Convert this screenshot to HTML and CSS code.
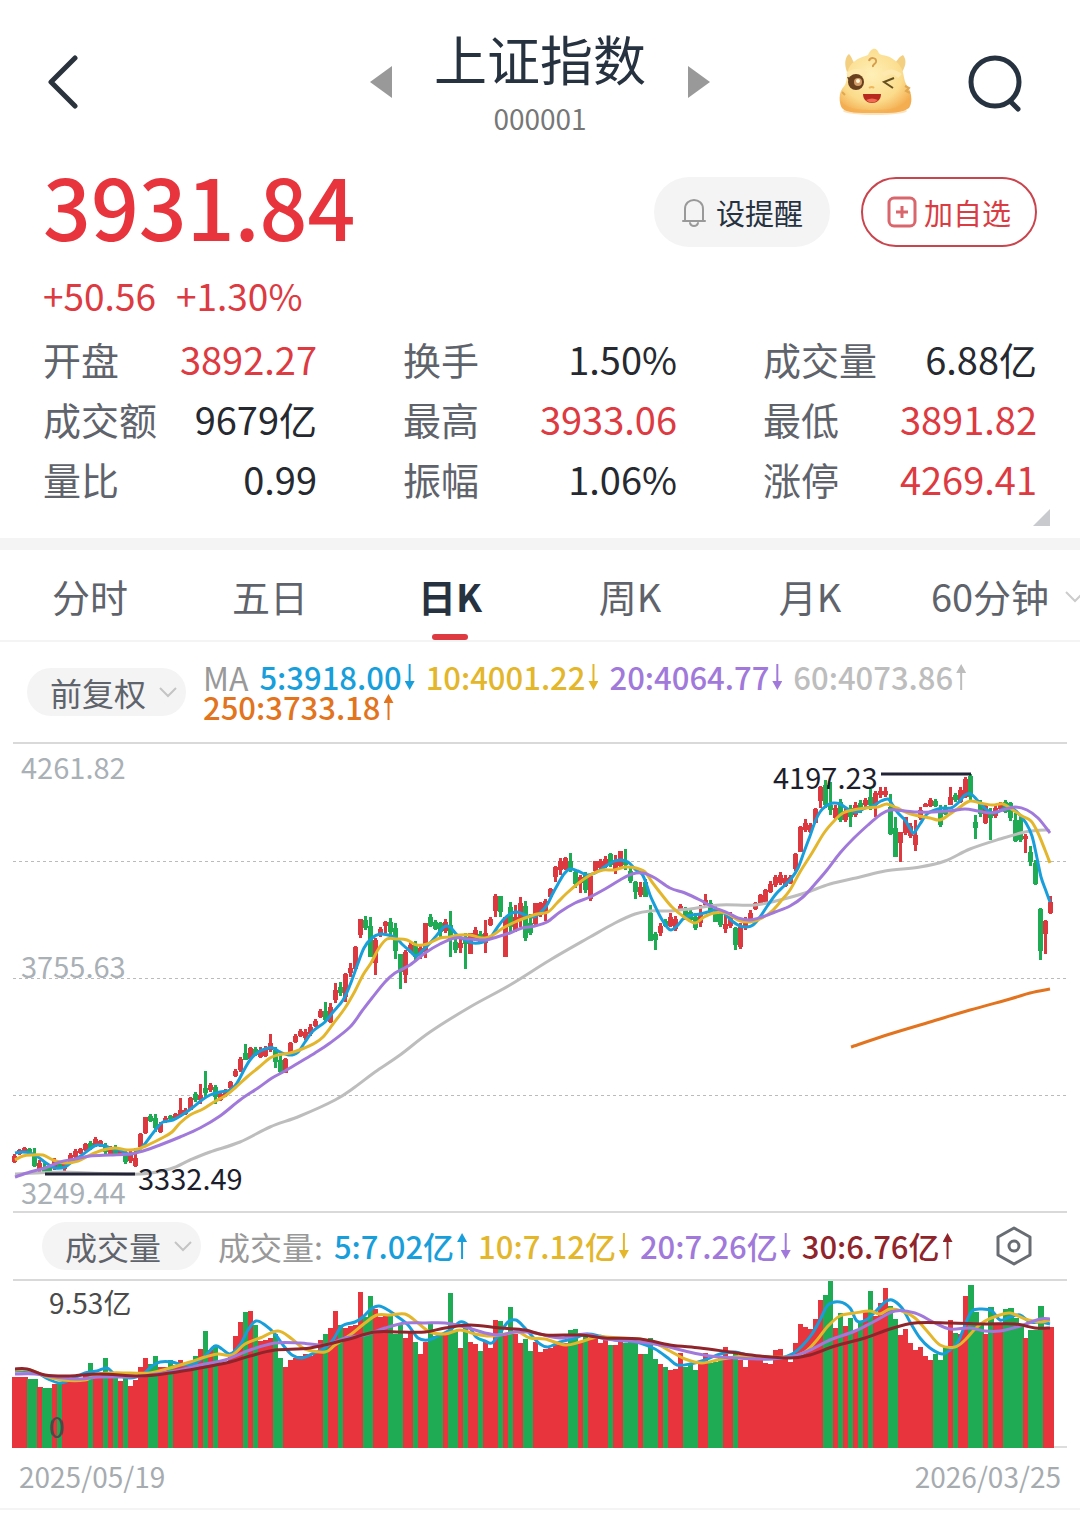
FILE: index.html
```html
<!DOCTYPE html>
<html lang="zh-CN">
<head>
    <meta charset="UTF-8">
    <meta name="viewport" content="width=device-width, initial-scale=1.0">
    <title>上证指数 000001</title>
    <link rel="stylesheet" href="styles.css">
</head>
<body>
    <header class="topbar">
        <button class="icon-btn back" aria-label="返回">
            <svg width="32" height="54" viewBox="0 0 32 54"><path d="M28 3L4 27l24 24" fill="none" stroke="#2a323c" stroke-width="5" stroke-linecap="round" stroke-linejoin="round"/></svg>
        </button>
        <div class="switcher">
            <button class="icon-btn" aria-label="上一个">
                <svg width="22" height="32" viewBox="0 0 22 32"><path d="M22 0v32L0 16z" fill="#999"/></svg>
            </button>
            <div class="name">
                <h1>上证指数</h1>
                <p>000001</p>
            </div>
            <button class="icon-btn" aria-label="下一个">
                <svg width="22" height="32" viewBox="0 0 22 32"><path d="M0 0v32l22-16z" fill="#999"/></svg>
            </button>
        </div>
        <div class="tools">
            <button class="icon-btn" aria-label="助手">
                <svg width="74" height="68" viewBox="0 0 74 68">
                    <defs>
                        <radialGradient id="skin" cx="45%" cy="40%" r="65%">
                            <stop offset="0" stop-color="#fff0b8"/>
                            <stop offset=".65" stop-color="#fbdc8c"/>
                            <stop offset="1" stop-color="#f3ac4e"/>
                        </radialGradient>
                    </defs>
                    <ellipse cx="37" cy="63" rx="32" ry="4" fill="#fde3bd"/>
                    <path d="M9 24C6 16 7 9 11 6c4 4 3 8 8 11zM64 24c5-8 4-13 1-17-5 2-6 7-10 10z" fill="#f3cf82"/>
                    <path d="M12 18C18 10 25 9 30 7c2-5 6-8 9-5 2 2 1 4 5 5 8 1 14 5 18 11 4 5 3 11 6 18 6 7 7 18 3 24-8 5-16 5-34 5S9 65 4 60C0 52 1 43 7 37c3-6 1-13 5-19z" fill="url(#skin)"/>
                    <path d="M3 53c6 8 17 9 34 9s26-3 34-11c1 5 0 9-4 11-9 4-51 4-60 0-4-2-5-5-4-9z" fill="#f4ad52" opacity=".65"/>
                    <path d="M31 13c1-4 8-4 7 1-1 3-4 2-3 5" fill="none" stroke="#d79e4d" stroke-width="2"/>
                    <path d="M67 38l4 2-3 3 4 2M4 44l3 3" fill="none" stroke="#e0a650" stroke-width="2"/>
                    <path d="M10 27c5-5 14-4 18-1M45 27c5-4 11-4 17 1" fill="none" stroke="#ffe9ae" stroke-width="5"/>
                    <circle cx="18" cy="34" r="8" fill="#68401f"/>
                    <path d="M9 29l6 1-3 5z" fill="#68401f"/>
                    <circle cx="20" cy="34" r="4" fill="#d39b67"/>
                    <circle cx="20" cy="33" r="2" fill="#fff7dd"/>
                    <path d="M56 30l-10 4 9 6" fill="none" stroke="#65501f" stroke-width="2"/>
                    <path d="M31 40q3-2 5 0" fill="none" stroke="#efb85c" stroke-width="2"/>
                    <path d="M25 46h18c0 12-18 12-18 0z" fill="#b7291e"/>
                    <path d="M28 52q6-3 12 0-6 5-12 0z" fill="#f06a54"/>
                </svg>
            </button>
            <button class="icon-btn" aria-label="搜索">
                <svg width="56" height="60" viewBox="0 0 56 60"><circle cx="27" cy="30" r="24" fill="none" stroke="#26323f" stroke-width="5"/><path d="M43 50l7 7" stroke="#26323f" stroke-width="5" stroke-linecap="round"/></svg>
            </button>
        </div>
    </header>

    <section class="quote">
        <div class="price-row">
            <strong class="price">3931.84</strong>
            <div class="actions">
                <button class="alert-btn">
                    <svg width="26" height="30" viewBox="0 0 26 30"><path d="M2 24h22M4 24V12c0-12 18-12 18 0v12M9 26c1 4 7 4 8 0" fill="none" stroke="#999" stroke-width="2" stroke-linecap="round"/></svg>
                    设提醒
                </button>
                <button class="add-btn">
                    <svg width="30" height="32" viewBox="0 0 30 32"><rect x="2" y="2" width="26" height="28" rx="5" fill="none" stroke="#d9666c" stroke-width="3"/><path d="M9 16h12M15 10v12" stroke="#d9666c" stroke-width="3"/></svg>
                    加自选
                </button>
            </div>
        </div>
        <p class="change"><span>+50.56</span><span>+1.30%</span></p>
        <dl class="stats">
            <div><dt>开盘</dt><dd class="up">3892.27</dd></div>
            <div><dt>换手</dt><dd>1.50%</dd></div>
            <div><dt>成交量</dt><dd>6.88亿</dd></div>
            <div><dt>成交额</dt><dd>9679亿</dd></div>
            <div><dt>最高</dt><dd class="up">3933.06</dd></div>
            <div><dt>最低</dt><dd class="up">3891.82</dd></div>
            <div><dt>量比</dt><dd>0.99</dd></div>
            <div><dt>振幅</dt><dd>1.06%</dd></div>
            <div><dt>涨停</dt><dd class="up">4269.41</dd></div>
        </dl>
        <button class="icon-btn expand" aria-label="展开">
            <svg width="17" height="17" viewBox="0 0 17 17"><path d="M17 0v17H0z" fill="#c9cacd"/></svg>
        </button>
    </section>

    <nav class="tabs">
        <button>分时</button>
        <button>五日</button>
        <button class="active">日K</button>
        <button>周K</button>
        <button>月K</button>
        <button class="more">60分钟
            <svg width="22" height="14" viewBox="0 0 22 14"><path d="M2 2l9 9 9-9" fill="none" stroke="#ccc" stroke-width="2"/></svg>
        </button>
    </nav>

    <main class="charts">
        <div class="legend-row">
            <div class="pick">
                <select aria-label="复权方式"><option>前复权</option></select>
                <svg width="20" height="13" viewBox="0 0 20 13"><path d="M2 2l8 8 8-8" fill="none" stroke="#c4c4c4" stroke-width="2"/></svg>
            </div>
            <div class="legend">
                <span class="legend-name">MA</span>
                <span class="ma5 down">5:3918.00</span>
                <span class="ma10 down">10:4001.22</span>
                <span class="ma20 down">20:4064.77</span>
                <span class="ma60 rise">60:4073.86</span>
                <span class="ma250 rise">250:3733.18</span>
            </div>
        </div>

        <svg class="kline" viewBox="13 744 1054 467" role="img" aria-label="日K线">
            <path class="grid" d="M13 861.5H1067M13 978.5H1067M13 1095.5H1067"/>
            <g id="candles"></g>
            <g id="priceLines"></g>
            <path class="marker" d="M45 1174H135M881 774H971"/>
            <g class="axis">
                <text x="21" y="779">4261.82</text>
                <text x="21" y="978">3755.63</text>
                <text x="21" y="1204">3249.44</text>
            </g>
            <g class="extreme">
                <text x="138" y="1190">3332.49</text>
                <text x="773" y="789">4197.23</text>
            </g>
        </svg>

        <div class="legend-row volume-row">
            <div class="pick">
                <select aria-label="副图指标"><option>成交量</option></select>
                <svg width="20" height="13" viewBox="0 0 20 13"><path d="M2 2l8 8 8-8" fill="none" stroke="#c4c4c4" stroke-width="2"/></svg>
            </div>
            <div class="legend">
                <span class="legend-name">成交量:</span>
                <span class="ma5 rise">5:7.02亿</span>
                <span class="ma10 down">10:7.12亿</span>
                <span class="ma20 down">20:7.26亿</span>
                <span class="ma30 rise">30:6.76亿</span>
            </div>
            <button class="icon-btn settings" aria-label="指标设置">
                <svg width="36" height="40" viewBox="0 0 36 40"><path d="M18 2l16 9v18l-16 9-16-9V11z" fill="none" stroke="#686c73" stroke-width="3" stroke-linejoin="round"/><circle cx="18" cy="20" r="5" fill="none" stroke="#686c73" stroke-width="3"/></svg>
            </button>
        </div>

        <svg class="volume" viewBox="13 1281 1054 167" role="img" aria-label="成交量">
            <path d="M13 1447H1067" stroke="#ddd" stroke-width="2"/>
            <g id="bars"></g>
            <g id="volumeLines"></g>
            <g class="scale">
                <text x="49" y="1314">9.53亿</text>
                <text x="49" y="1438">0</text>
            </g>
        </svg>
        <div class="dates"><time>2025/05/19</time><time>2026/03/25</time></div>
    </main>
    <script src="chart.js"></script>
</body>
</html>
```
FILE: styles.css
```css
* {
    box-sizing: border-box;
}
body {
    margin: 0;
    background: #fff;
    color: #26292f;
    font-family: "Noto Sans CJK SC", "Noto Sans", sans-serif;
    overflow-x: hidden;
}
h1, p, dl, dd {
    margin: 0;
    font-weight: 400;
}
button, select {
    font: inherit;
    color: inherit;
    background: none;
    border: none;
    padding: 0;
    cursor: pointer;
}
svg {
    display: block;
    flex-shrink: 0;
}
.icon-btn {
    display: block;
}

/* header */
.topbar {
    display: grid;
    grid-template-columns: 1fr auto 1fr;
    align-items: center;
    height: 163px;
    padding: 0 47px;
}
.back {
    justify-self: start;
}
.switcher {
    display: flex;
    align-items: center;
    gap: 42px;
}
.name {
    text-align: center;
}
.name h1 {
    font-size: 53px;
    line-height: 72px;
    color: #26323f;
}
.name p {
    font-size: 28px;
    line-height: 48px;
    color: #777;
}
.tools {
    display: flex;
    align-items: center;
    justify-content: flex-end;
    gap: 56px;
    padding-right: 9px;
}

/* quote */
.quote {
    padding: 0 43px 12px;
    border-bottom: 12px solid #f4f4f4;
}
.price-row {
    display: flex;
    justify-content: space-between;
    align-items: center;
    height: 98px;
}
.price {
    align-self: flex-start;
    font-size: 84px;
    line-height: 84px;
    font-weight: 500;
    color: #e8343c;
}
.actions {
    display: flex;
    align-items: center;
    gap: 31px;
}
.alert-btn, .add-btn {
    display: flex;
    align-items: center;
    justify-content: center;
    width: 176px;
    height: 70px;
    border-radius: 35px;
    font-size: 29px;
}
.alert-btn {
    gap: 9px;
    background: #f4f4f4;
    color: #26323f;
}
.add-btn {
    gap: 7px;
    border: 2px solid #c9444c;
    color: #d93c42;
}
.change {
    display: flex;
    gap: 20px;
    padding: 6px 0;
    font-size: 37px;
    line-height: 56px;
    color: #dd3a41;
}
.stats {
    display: grid;
    grid-template-columns: repeat(3, 1fr);
    column-gap: 86px;
    font-size: 38px;
    line-height: 60px;
}
.stats div {
    display: flex;
    justify-content: space-between;
}
.stats dt {
    color: #5f636b;
}
.stats .up {
    color: #dd3a41;
}
.expand {
    margin: 0 -13px 0 auto;
}

/* period tabs */
.tabs {
    display: grid;
    grid-template-columns: repeat(6, 1fr);
    height: 92px;
    border-bottom: 2px solid #f4f4f4;
}
.tabs button {
    position: relative;
    font-size: 38px;
    color: #5f636b;
    white-space: nowrap;
}
.tabs .active {
    font-weight: 700;
    color: #26323f;
}
.tabs .active::after {
    content: "";
    position: absolute;
    left: 50%;
    bottom: 0;
    width: 36px;
    height: 6px;
    margin-left: -18px;
    border-radius: 3px;
    background: #dd3a41;
}
.tabs .more svg {
    position: absolute;
    right: -6px;
    top: 40px;
}

/* charts */
.charts {
    padding: 0 13px 12px;
    border-bottom: 2px solid #f4f4f4;
}
.legend-row {
    display: flex;
    align-items: center;
    gap: 17px;
    height: 102px;
    padding-left: 14px;
    border-bottom: 2px solid #d9d9d9;
}
.volume-row {
    height: 70px;
    padding: 0 35px 0 29px;
    border-top: 2px solid #d9d9d9;
}
.pick {
    position: relative;
    flex-shrink: 0;
    width: 159px;
    height: 48px;
    border-radius: 24px;
    background: #f4f4f4;
}
.pick select {
    appearance: none;
    width: 100%;
    height: 100%;
    padding-left: 23px;
    font-size: 32px;
    color: #5f636b;
}
.pick svg {
    position: absolute;
    right: 8px;
    top: 18px;
    pointer-events: none;
}
.legend {
    display: flex;
    flex-wrap: wrap;
    column-gap: 11px;
    font-size: 31px;
    line-height: 30px;
    font-weight: 500;
}
.legend-name {
    font-size: 32px;
    font-weight: 400;
    color: #999;
}
.rise, .down {
    display: flex;
    align-items: center;
}
.rise::after, .down::after {
    content: "";
    width: 10px;
    height: 26px;
    margin-left: 3px;
    background: currentColor;
    clip-path: polygon(50% 0, 100% 35%, 60% 35%, 60% 100%, 40% 100%, 40% 35%, 0 35%);
}
.down::after {
    clip-path: polygon(50% 100%, 100% 65%, 60% 65%, 60% 0, 40% 0, 40% 65%, 0 65%);
}
.ma5 { color: #189fdb; }
.ma10 { color: #e3b62b; }
.ma20 { color: #a079db; }
.ma30 { color: #8f242b; }
.ma60 { color: #bdbdbd; }
.ma250 { color: #e27420; }
.settings {
    margin-left: auto;
}
.kline, .volume {
    width: 100%;
    height: auto;
    overflow: visible;
    font-size: 29px;
}
.grid {
    stroke: #bbb;
    stroke-dasharray: 3 3;
}
.marker {
    stroke: #222336;
    stroke-width: 3;
}
.axis {
    fill: #a9b0b6;
}
.extreme {
    fill: #1d1e2c;
}
.scale {
    font-size: 28px;
    fill: #4b4b4b;
}
.line {
    fill: none;
    stroke: currentColor;
    stroke-width: 3;
    stroke-linejoin: round;
}
.red {
    fill: #e8343c;
}
.green {
    fill: #1fab54;
}
#candles, #bars {
    shape-rendering: crispEdges;
}
#candles .red {
    fill: #dc3840;
}
.dates {
    display: flex;
    justify-content: space-between;
    padding: 8px 6px 0;
    font-size: 28px;
    line-height: 40px;
    color: #a6abb0;
}
```
FILE: chart.js
```js
const START = 12.4;
const STEP = 5.005;

// up / down days, run by run
const runs = "r3 g2 r1 g2 r1 g1 r5 g1 r2 g1 r1 g1 r1 g1 r4 g2 r2 g1 r4 g1 r1 g1 r1 g1 r5 g1 r1 g1 r3 g2 r8 g1 r2 g1 r4 g2 r3 g3 r2 g1 r2 g3 r1 g2 r1 g1 r2 g1 r3 g1 r1 g1 r2 g2 r7 g2 r1 g1 r4 g1 r2 g3 r1 g3 r1 g1 r3 g3 r2 g3 r2 g1 r17 g2 r1 g1 r1 g1 r1 g1 r1 g1 r3 g2 r7 g3 r1 g1 r2 g3 r1 g1 r2 g4 r1 g3 r2";
const days = runs.split(" ").flatMap(r => Array(Number(r.slice(1))).fill(r[0] === "r" ? "red" : "green"));

// high,low[,body top,body bottom] in thirds of a unit below each segment's top
const segments = [
    { top: 1000, rows: "462,488,468,485 447,465 440,460 443,462 444,500,462,498 480,515,488,510 490,520,500,515 500,525 475,510 485,508 480,512 460,490 447,475 443,462 428,452 422,450 412,440 420,440 430,462 438,465 435,465 445,468 450,492 450,490 445,502,475,498 398,445,402,440 350,402,352,400 343,365 343,395,355,385 365,400 348,370 345,360 340,355 295,350,330,348 325,345 292,330,294,330 275,305 252,312,285,300 213,290,265,280 248,275 255,313,262,290 275,303 268,290 242,268 207,230 172,215,177,210 133,180,160,180 140,180,143,178 140,168 142,175 137,172 103,155,128,150 142,203,150,185 165,220,180,215 175,220,178,218 127,160,130,158 103,130 88,112 88,120 73,108" },
    { top: 820, rows: "597,620 568,595 547,603,573,600 550,608,560,605 490,548,510,540 487,527,500,518 460,545,463,530 430,470,445,460 378,450,380,448 297,355,297,345 288,330,300,325 290,410,318,410 355,465,360,430 320,350 303,340,305,318 294,345,305,335 310,418,325,392 402,507,402,455 390,488,395,465 367,400 363,420,375,412 377,418,385,405 308,415,310,395 282,320,292,318 300,330 305,358,310,335 297,340 273,410,315,360 350,400,365,390 350,400,370,385 340,447,350,372 338,403,340,403 322,362 333,372 300,398,340,370 290,318 222,292,227,272 228,290,228,275 290,410,290,410 247,335,262,320 255,335,290,330 232,320,250,300 243,362,258,355 283,345,310,340 248,318,250,312 245,290,250,285 238,303,242,280 205,232,206,230 137,185,142,172 115,165,122,150 112,150,115,148 100,155,122,150 150,205,155,192 165,220,170,190 155,218,165,210 165,242,168,238 122,155,124,152 118,148 108,145 100,140,103,135 105,162,120,150 92,140,94,138 87,150,125,135 145,190 182,236,185,215 185,230,200,225 178,232,185,230" },
    { top: 750, rows: "465,572,490,572 545,600,553,570 520,558,527,550 508,530 488,530,500,528 497,542 463,482 472,510 480,515 490,540 465,532,495,520 432,470,450,465 450,490 465,515,485,515 480,532 495,550,522,537 487,535 530,600,535,585 520,597,530,592 500,540 480,520 455,480,458,478 432,465,434,462 417,457,419,455 393,430 375,410 367,405 375,412 375,402 308,362,312,357 228,307,230,305 207,245,220,240 218,250 175,220,177,218 108,175,112,152 90,175,105,165 95,195,165,180 165,210 148,215,155,210 175,217 165,230,175,200 155,200 150,190 145,170 118,180,140,165 122,200,130,165 110,145,122,136 110,142,122,136 132,255,170,253 200,322,235,320 245,337,247,280 200,255,200,250 220,265 210,302,255,285 172,210 158,172 145,172 148,170 165,232,180,225 165,195 110,165,140,165 128,155 112,160,120,155 82,145,88,140 72,150,78,140 195,267,215,235 150,200 165,222,168,220 175,270,185,205 165,203 155,180 150,190,155,185 155,212,160,205 190,275,210,272 200,275,210,270 252,310,258,268 287,348,305,335 330,405,340,402 475,630,478,602 510,612,513,552 438,493,455,490" }
];

const volumeTops = [501,501,501,507,507,531,534,534,522,522,505,505,505,505,490,459,496,494,444,494,505,513,503,528,510,471,444,462,437,470,470,450,465,450,462,455,438,417,363,420,405,458,460,440,378,337,306,303,345,393,390,385,372,443,471,451,445,437,432,437,425,390,372,354,303,345,355,348,346,246,320,258,297,320,316,316,372,345,384,366,396,432,396,340,378,372,372,249,362,414,350,396,402,423,396,414,330,333,372,291,372,399,387,423,396,
    425,416,414,405,400,398,360,357,395,370,384,384,398,390,404,404,390,398,390,400,432,432,385,447,462,470,480,477,430,470,465,479,462,428,460,455,445,411,445,430,450,470,445,448,440,460,463,420,418,440,455,400,343,350,358,328,270,255,213,353,310,348,323,360,335,300,243,318,280,234,288,327,375,357,398,420,412,437,449,433,449,410,331,370,372,258,225,305,345,373,291,345,342,297,294,325,345,384,360,360,288,352,351];

const priceLines = {
    ma60: "15,1174 60,1172 90,1173 140,1174 170,1169 190,1160 210,1152 240,1142 270,1127 300,1116 335,1100 355,1087 375,1072 400,1055 430,1032 470,1007 510,985 550,960 590,937 615,923 635,914 650,911 670,911 690,909 720,905 755,905 780,900 805,893 830,884 860,877 885,871 920,867 945,861 970,849 1000,839 1025,832 1045,830 1050,831",
    ma250: "851,1047 890,1034 930,1022 970,1010 1010,999 1030,993 1050,989",
    ma5: "15,1153 22,1152 30,1153 38,1157 46,1163 55,1168 65,1167 73,1161 82,1155 90,1149 97,1145 105,1146 113,1149 120,1150 128,1154 135,1153 143,1146 150,1137 157,1128 163,1122 173,1120 182,1115 192,1108 202,1100 210,1095 220,1092 230,1090 237,1083 244,1070 250,1060 257,1053 265,1049 273,1048 280,1052 290,1055 298,1052 305,1042 313,1031 325,1022 333,1012 343,1000 350,985 357,966 364,948 372,938 380,934 388,935 396,938 403,945 410,951 416,956 423,950 430,943 437,935 444,927 450,927 457,935 465,940 473,943 483,942 490,938 497,928 503,920 510,914 517,912 525,915 533,917 540,913 547,905 552,895 558,884 564,874 570,869 578,871 587,875 595,873 603,868 612,862 620,860 628,862 636,870 642,874 646,883 650,895 655,906 661,918 667,927 671,930 677,926 684,918 692,915 700,914 708,912 716,910 724,913 732,921 740,926 747,927 753,925 760,917 768,905 776,894 784,886 791,879 798,868 804,852 810,836 815,822 820,812 826,806 833,803 840,804 848,809 857,812 865,808 873,806 881,801 888,799 892,804 898,813 905,820 911,830 914,833 920,824 927,814 935,810 943,808 951,808 958,803 965,795 971,794 978,801 987,810 995,813 1003,809 1010,807 1018,813 1026,823 1032,836 1037,858 1041,877 1046,891 1050,902",
    ma10: "15,1160 23,1156 33,1155 43,1155 53,1160 65,1163 78,1161 90,1155 103,1150 115,1148 127,1150 138,1149 150,1144 162,1138 172,1132 180,1123 190,1115 203,1109 214,1102 225,1096 235,1088 247,1077 258,1068 270,1058 278,1055 290,1053 302,1049 315,1043 323,1037 333,1024 345,1008 355,991 363,975 371,963 379,948 387,939 397,939 407,940 417,945 427,944 440,938 450,937 460,935 470,935 483,938 493,935 503,928 515,922 525,918 537,914 548,912 557,903 567,893 580,882 592,874 603,870 614,870 625,867 636,868 645,872 652,882 662,895 672,907 684,917 695,923 704,917 714,913 726,913 738,920 750,922 762,918 772,911 781,901 790,890 800,872 812,853 824,833 835,820 843,813 853,810 866,808 878,807 887,804 897,808 908,813 919,816 930,818 940,820 950,814 960,807 970,801 980,803 992,805 1003,804 1013,810 1022,816 1031,821 1038,833 1045,850 1050,863",
    ma20: "15,1177 30,1172 45,1168 60,1162 75,1159 90,1156 110,1155 130,1154 143,1151 160,1145 180,1137 200,1128 220,1116 240,1100 258,1088 272,1078 285,1071 300,1062 315,1053 330,1043 350,1027 362,1011 372,998 385,982 395,973 410,965 425,953 440,944 455,938 470,939 485,940 497,937 510,933 522,928 535,926 547,922 560,912 575,903 590,897 605,889 620,880 632,874 643,873 655,878 670,888 685,893 700,900 713,907 728,913 738,918 750,920 762,917 775,912 790,906 803,897 815,884 827,870 840,853 853,839 868,825 880,815 890,810 905,811 918,812 933,812 950,811 965,809 978,811 990,813 1003,810 1015,807 1027,810 1038,818 1050,833"
};

const volumeLines = {
    ma5: "15,1371 35,1372 48,1379 60,1383 72,1379 85,1373 97,1371 107,1368 115,1374 130,1378 143,1374 152,1366 160,1362 172,1362 183,1365 195,1363 205,1356 215,1346 222,1349 230,1354 240,1345 248,1330 256,1321 265,1325 275,1334 283,1345 292,1355 302,1358 312,1354 325,1348 333,1340 342,1326 355,1322 363,1317 371,1309 379,1306 388,1310 398,1317 408,1325 418,1338 428,1340 438,1336 450,1330 460,1322 468,1325 476,1337 485,1341 492,1343 500,1333 508,1322 516,1320 524,1327 532,1336 540,1344 548,1347 560,1342 575,1338 587,1334 600,1336 615,1340 628,1341 640,1343 655,1349 668,1358 677,1365 690,1364 705,1360 720,1354 735,1352 750,1356 765,1359 780,1358 792,1354 802,1346 812,1334 820,1320 828,1305 840,1302 850,1308 857,1321 866,1320 876,1311 885,1302 892,1300 902,1308 910,1322 920,1338 930,1348 942,1354 950,1350 958,1342 965,1325 972,1311 982,1309 992,1311 1000,1320 1010,1317 1020,1315 1030,1322 1040,1322 1050,1324",
    ma10: "15,1370 30,1370 45,1376 62,1380 85,1380 95,1375 110,1373 130,1373 150,1373 170,1368 190,1362 205,1357 218,1354 232,1355 245,1344 260,1338 278,1331 292,1339 305,1349 325,1352 335,1345 350,1335 365,1323 377,1315 390,1315 405,1314 418,1323 430,1332 445,1334 460,1330 475,1334 490,1336 505,1334 518,1332 530,1338 545,1339 565,1345 580,1342 598,1337 620,1338 640,1339 655,1343 670,1351 685,1359 702,1363 722,1359 745,1356 770,1357 790,1357 805,1352 817,1340 828,1326 840,1316 855,1313 870,1311 880,1314 890,1309 902,1311 915,1318 927,1331 940,1345 955,1347 965,1340 975,1329 985,1321 997,1316 1010,1313 1025,1319 1040,1322 1050,1320",
    ma20: "15,1374 35,1374 55,1377 80,1379 100,1377 130,1377 150,1375 180,1370 200,1365 225,1360 250,1350 275,1343 300,1343 325,1345 345,1338 365,1335 385,1328 405,1323 425,1323 445,1323 465,1327 485,1333 500,1335 515,1332 535,1333 560,1338 585,1334 605,1339 630,1341 660,1345 685,1351 710,1356 735,1358 765,1359 790,1357 810,1350 830,1340 855,1331 875,1321 895,1311 915,1313 935,1323 950,1329 970,1328 985,1331 1000,1331 1020,1326 1040,1319 1050,1319",
    ma30: "15,1369 27,1369 45,1375 70,1376 100,1374 140,1376 170,1373 200,1368 230,1362 250,1356 275,1350 310,1348 345,1340 375,1332 400,1332 425,1332 445,1328 470,1325 500,1328 525,1330 545,1335 580,1335 605,1338 640,1339 670,1345 700,1348 730,1352 760,1356 790,1358 810,1355 835,1346 865,1338 890,1329 915,1323 950,1323 985,1324 1015,1324 1035,1328 1050,1328"
};

function rect(cls, x, y, w, h) {
    return `<rect class="${cls}" x="${x.toFixed(1)}" y="${y.toFixed(1)}" width="${w}" height="${h.toFixed(1)}"/>`;
}

function drawCandles() {
    let out = "";
    let i = 0;
    segments.forEach(seg => {
        seg.rows.split(" ").forEach(row => {
            const [high, low, open, close] = row.split(",").map(Number);
            const top = open === undefined ? high + (low - high) * 0.2 : open;
            const bottom = close === undefined ? low - (low - high) * 0.15 : close;
            const x = START + i * STEP;
            out += rect(days[i], x + 1, seg.top + high / 3, 3, (low - high) / 3);
            out += rect(days[i], x, seg.top + top / 3, 5, (bottom - top) / 3);
            i++;
        });
    });
    document.getElementById("candles").innerHTML = out;
}

function drawVolume() {
    document.getElementById("bars").innerHTML = volumeTops.map((v, i) =>
        rect(days[i], START + i * STEP, 1210 + v / 3, 5.1, 238 - v / 3)).join("");
}

// smooth curve through the points
function curve(text) {
    const p = text.split(" ").map(s => s.split(",").map(Number));
    let d = `M${p[0]}`;
    for (let i = 0; i < p.length - 1; i++) {
        const a = p[i - 1] || p[i], b = p[i], c = p[i + 1], e = p[i + 2] || c;
        d += `C${b[0] + (c[0] - a[0]) / 6},${b[1] + (c[1] - a[1]) / 6} ${c[0] - (e[0] - b[0]) / 6},${c[1] - (e[1] - b[1]) / 6} ${c}`;
    }
    return d;
}

function drawLines(id, lines) {
    document.getElementById(id).innerHTML = Object.keys(lines).map(k =>
        `<path class="line ${k}" d="${curve(lines[k])}"/>`).join("");
}

drawCandles();
drawVolume();
drawLines("priceLines", priceLines);
drawLines("volumeLines", volumeLines);
```
